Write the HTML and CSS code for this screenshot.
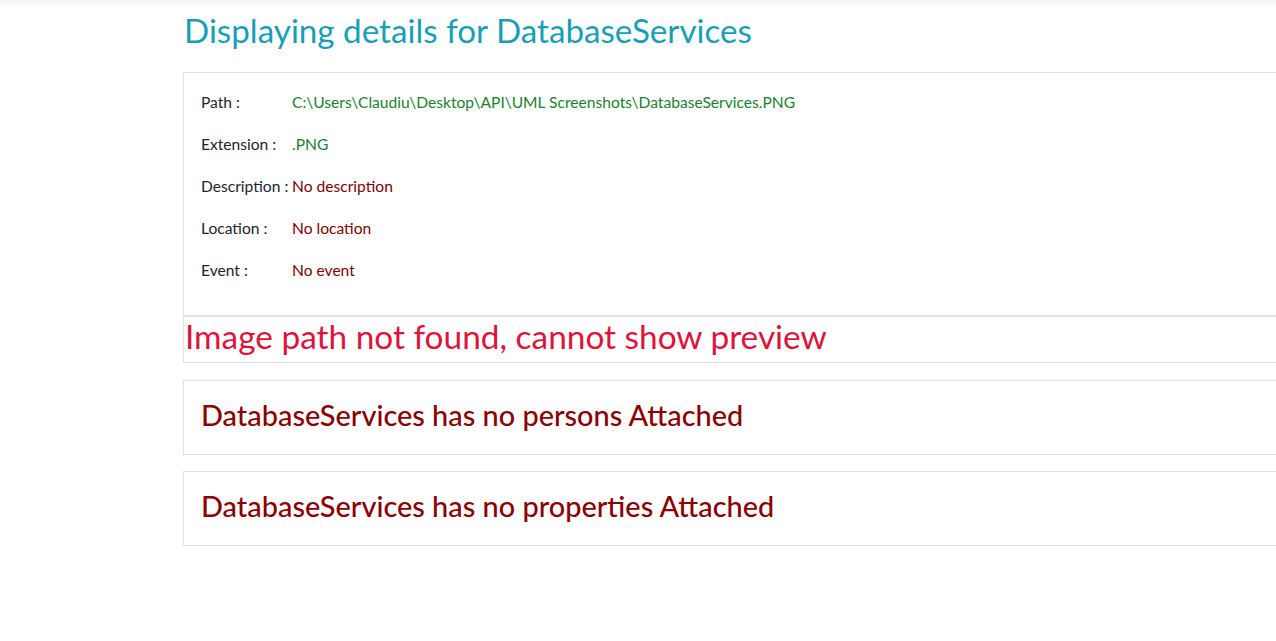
FILE: index.html
```html
<!DOCTYPE html>
<html lang="en">
<head>
<meta charset="utf-8">
<title>Details</title>
<link rel="stylesheet" href="styles.css">
</head>
<body>
<div class="topshade"></div>
<main class="container">
  <h2 class="page-title">Displaying details for DatabaseServices</h2>

  <section class="card details">
    <div class="detail-grid">
      <div class="label">Path :</div><div class="value value-ok">C:\Users\Claudiu\Desktop\API\UML Screenshots\DatabaseServices.PNG</div>
      <div class="label">Extension :</div><div class="value value-ok">.PNG</div>
      <div class="label">Description :</div><div class="value value-missing">No description</div>
      <div class="label">Location :</div><div class="value value-missing">No location</div>
      <div class="label">Event :</div><div class="value value-missing">No event</div>
    </div>
  </section>

  <section class="card preview">
    <h2 class="preview-error">Image path not found, cannot show preview</h2>
  </section>

  <section class="card notice">
    <h3 class="notice-text">DatabaseServices has no persons Attached</h3>
  </section>

  <section class="card notice">
    <h3 class="notice-text">DatabaseServices has no properties Attached</h3>
  </section>
</main>
</body>
</html>
```

FILE: styles.css
```css
html, body {
  margin: 0;
  padding: 0;
  background: #fff;
  overflow: hidden;
}

body {
  font-family: Lato, "Open Sans", "Liberation Sans", sans-serif;
  color: #212529;
  font-size: 15.6px;
}

.topshade {
  height: 8px;
  background: linear-gradient(#f4f4f4, #ffffff);
}

.container {
  margin-left: 183px;
  width: 1110px;
}

.page-title {
  margin: 3px 0 0 1px;
  font-size: 33.2px;
  font-weight: 400;
  line-height: 38px;
  color: #189fb7;
  height: 61px;
}

.card {
  border: 1px solid #dee2e6;
  background: #fff;
}

.details {
  padding: 8px 16px 24px 17px;
}

.detail-grid {
  display: grid;
  grid-template-columns: 91px 1fr;
  grid-auto-rows: 42px;
  align-items: center;
}

.label {
  color: #212529;
  white-space: nowrap;
}

.value-ok {
  color: #1a7f2e;
}

.value-missing {
  color: #800000;
}

.preview {
  border-top: 1px solid #dee2e6;
}

.preview-error {
  margin: 0 0 7px 1px;
  font-size: 33.4px;
  font-weight: 400;
  line-height: 38px;
  color: #dc143c;
}

.notice {
  margin-top: 17px;
  padding: 17px 16px 22px 17px;
}

.notice + .notice {
  margin-top: 16px;
}

.notice-text {
  margin: 0;
  font-size: 28.9px;
  font-weight: 500;
  line-height: 34px;
  color: #8b0000;
}
```
